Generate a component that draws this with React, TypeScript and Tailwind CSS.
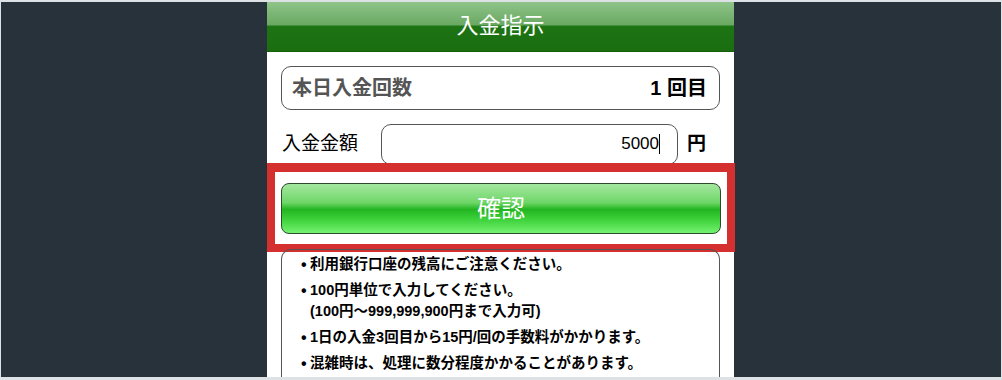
export default function App() {
  const notes = [
    ['利用銀行口座の残高にご注意ください。'],
    ['100円単位で入力してください。', '(100円～999,999,900円まで入力可)'],
    ['1日の入金3回目から15円/回の手数料がかかります。'],
    ['混雑時は、処理に数分程度かかることがあります。'],
  ];

  return (
    <div className="w-[1002px] h-[380px] overflow-hidden bg-[#28323a] border-t-2 border-l border-r border-b-[3px] border-[#dde2e6] font-['Liberation_Sans','Noto_Sans_CJK_JP',sans-serif]">
      <div className="ml-[266px] w-[467px] h-full bg-white flex flex-col">
        {/* header */}
        <div className="h-[50px] shrink-0 flex items-center justify-center border-b border-[#155f0c] bg-[linear-gradient(to_bottom,#8fc489_0%,#6aa963_46%,#1d7413_50%,#1a6e10_100%)]">
          <span className="text-white text-[22px] leading-none -mt-[1px]">入金指示</span>
        </div>

        <div className="px-[14px] pt-[14px]">
          {/* count */}
          <div className="h-[44px] rounded-[10px] border-[1.5px] border-[#555] flex items-center justify-between pl-[10px] pr-[12px]">
            <span className="text-[20px] font-bold text-[#555]">本日入金回数</span>
            <span className="text-[20px] font-bold text-black">1 回目</span>
          </div>

          {/* amount */}
          <div className="mt-[14px] h-[40px] flex items-center">
            <span className="w-[100px] pl-[1px] text-[19px] text-black">入金金額</span>
            <div className="w-[297px] h-[41px] rounded-[10px] border border-[#555] flex items-center justify-end pr-[17px]">
              <span className="text-[17px] text-black">5000</span>
              <span className="w-[1px] h-[20px] bg-black" />
            </div>
            <span className="ml-[9px] text-[19px] font-bold text-black">円</span>
          </div>
        </div>

        {/* highlighted confirm button */}
        <div className="-mt-[1px] w-[468px] border-[8px] border-t-[9px] border-[#d3302f] px-[6px] pt-[11px] pb-[10px]">
          <div className="h-[51px] rounded-[8px] border border-[#2d4a2b] flex items-center justify-center bg-[linear-gradient(to_bottom,#a4e79f_0%,#6fd668_38%,#22b521_52%,#3dd13a_72%,#74f271_100%)]">
            <span className="text-white text-[24px] leading-none">確認</span>
          </div>
        </div>

        {/* notes */}
        <div className="mx-[14px] -mt-[3px] flex-1 rounded-t-[10px] border border-b-0 border-[#555] pt-[4px] pl-[19px] flex flex-col gap-[5px]">
          {notes.map((lines, i) => (
            <div key={i} className="flex text-[14.5px] font-bold leading-[21px] text-black">
              <span className="w-[9px] shrink-0 text-[16px]">•</span>
              <div className="flex flex-col">
                {lines.map((l, j) => (
                  <span key={j}>{l}</span>
                ))}
              </div>
            </div>
          ))}
        </div>
      </div>
    </div>
  );
}
